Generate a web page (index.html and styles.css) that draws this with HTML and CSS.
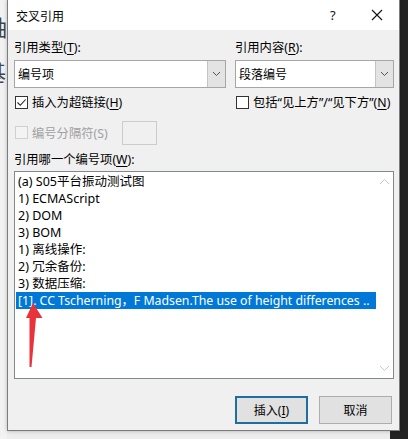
FILE: index.html
```html
<!DOCTYPE html>
<html lang="zh-CN">
<head>
<meta charset="utf-8">
<title>交叉引用</title>
<link rel="stylesheet" href="styles.css">
</head>
<body>
<div class="screen">
  <div class="doc">
    <span class="doc-g1">轴</span>
    <span class="doc-g2">基</span>
  </div>
  <div class="dialog">
    <div class="titlebar">
      <span class="title">交叉引用</span>
      <span class="help">?</span>
      <span class="close"><svg width="12" height="12" viewBox="0 0 12 12"><path d="M1 1L11 11M11 1L1 11" stroke="#111" stroke-width="1.1" fill="none"/></svg></span>
    </div>
    <div class="body">
      <div class="grid">
        <div class="label">引用类型(<u>T</u>):</div>
        <div class="label">引用内容(<u>R</u>):</div>
        <div class="select"><span class="sel-text">编号项</span><span class="sel-btn"><svg width="9" height="6" viewBox="0 0 9 6"><path d="M1 1L4.5 4.5L8 1" stroke="#555" stroke-width="1" fill="none"/></svg></span></div>
        <div class="select"><span class="sel-text">段落编号</span><span class="sel-btn"><svg width="9" height="6" viewBox="0 0 9 6"><path d="M1 1L4.5 4.5L8 1" stroke="#555" stroke-width="1" fill="none"/></svg></span></div>
        <div class="check"><span class="box"><svg width="11" height="11" viewBox="0 0 11 11"><path d="M1.5 5.5L4.3 8.3L9.6 2.5" stroke="#222" stroke-width="1.1" fill="none"/></svg></span>插入为超链接(<u>H</u>)</div>
        <div class="check"><span class="box"></span>包括“见上方”/“见下方”(<u>N</u>)</div>
      </div>
      <div class="sep-row">
        <div class="check disabled"><span class="box"></span>编号分隔符(S)</div>
        <span class="sep-input"></span>
      </div>
      <div class="label which">引用哪一个编号项(<u>W</u>):</div>
      <div class="listbox">
        <div class="items">
          <div class="item">(a) S05平台振动测试图</div>
          <div class="item">1) ECMAScript</div>
          <div class="item">2) DOM</div>
          <div class="item">3) BOM</div>
          <div class="item">1) 离线操作:</div>
          <div class="item">2) 冗余备份:</div>
          <div class="item">3) 数据压缩:</div>
          <div class="item selected">[1]. CC Tscherning，F Madsen.The use of height differences ..</div>
        </div>
        <div class="scrollbar">
          <svg width="11" height="7" viewBox="0 0 11 7"><path d="M1 6L5.5 1.5L10 6" stroke="#c8c8c8" stroke-width="1" fill="none"/></svg>
          <svg width="11" height="7" viewBox="0 0 11 7"><path d="M1 1L5.5 5.5L10 1" stroke="#c8c8c8" stroke-width="1" fill="none"/></svg>
        </div>
      </div>
      <div class="buttons">
        <button class="btn default">插入(<u>I</u>)</button>
        <button class="btn">取消</button>
      </div>
    </div>
  </div>
  <svg class="arrow" width="408" height="439" viewBox="0 0 408 439">
    <path d="M33 303L42.5 318L36 318L31.5 367L29.5 367L29.5 318L26 318Z" fill="#e8333b"/>
  </svg>
</div>
</body>
</html>
```

FILE: styles.css
```css
html, body {
  margin: 0;
  padding: 0;
}
body {
  width: 408px;
  height: 439px;
  overflow: hidden;
  font-family: "Noto Sans", "Noto Sans CJK SC", sans-serif;
  font-size: 12px;
  color: #000;
}
.screen {
  position: relative;
  width: 408px;
  height: 439px;
  background: linear-gradient(to right, #ededed 0, #ededed 390px, #232323 390px);
  overflow: hidden;
}
.doc {
  position: absolute;
  left: 0;
  top: 0;
  width: 7px;
  height: 439px;
  background: #f2f2f2;
  overflow: hidden;
  font-family: "Noto Sans CJK SC", sans-serif;
  font-size: 22px;
  color: #444;
}
.doc-g1 {
  position: absolute;
  left: -15px;
  top: 10px;
}
.doc-g2 {
  position: absolute;
  left: -16px;
  top: 55px;
}
.dialog {
  position: relative;
  margin-left: 7px;
  width: 391px;
  height: 430px;
  border: 1px solid #7c7c7c;
  border-top: none;
  background: #f0f0f0;
  display: flex;
  flex-direction: column;
  box-shadow: 0 0 4px rgba(0,0,0,0.25);
}
.titlebar {
  height: 30px;
  background: #fff;
  display: flex;
  align-items: center;
  padding-left: 8px;
  flex: none;
}
.title {
  font-family: "Noto Sans CJK SC", sans-serif;
  font-size: 12px;
  flex: 1;
}
.help {
  font-size: 13px;
  width: 14px;
  margin-right: 27px;
  color: #111;
}
.close {
  width: 12px;
  height: 12px;
  margin-right: 16px;
  display: flex;
}
.body {
  padding: 10px 5px 0 6px;
  display: flex;
  flex-direction: column;
}
.grid {
  display: grid;
  grid-template-columns: 212px 159px;
  column-gap: 9px;
  row-gap: 4px;
}
.label {
  height: 16px;
  line-height: 16px;
  white-space: nowrap;
  font-size: 12.3px;
}
u {
  text-decoration: underline;
  text-underline-offset: 2px;
}
.select {
  height: 28px;
  box-sizing: border-box;
  border: 1px solid #a6a6a6;
  background: #fff;
  display: flex;
  align-items: stretch;
}
.sel-text {
  flex: 1;
  padding-left: 3px;
  display: flex;
  align-items: center;
}
.sel-btn {
  width: 17px;
  background: #e3e3e3;
  border-left: 1px solid #c4c4c4;
  display: flex;
  align-items: center;
  justify-content: center;
}
.check {
  height: 16px;
  margin-top: 2px;
  display: flex;
  align-items: center;
  white-space: nowrap;
  font-size: 12.3px;
}
.box {
  width: 13px;
  height: 13px;
  box-sizing: border-box;
  border: 1px solid #333;
  background: #fff;
  margin: 0 4px 0 1px;
  display: flex;
  align-items: center;
  justify-content: center;
}
.check.disabled {
  color: #a0a0a0;
}
.check.disabled .box {
  border-color: #d0d0d0;
  background: #f3f3f3;
}
.sep-row {
  display: flex;
  align-items: center;
  margin-top: 10px;
  height: 25px;
}
.sep-row .check {
  margin-top: 0;
}
.sep-input {
  width: 35px;
  height: 24px;
  box-sizing: border-box;
  border: 1px solid #cccccc;
  margin-left: 14px;
}
.which {
  margin-top: 7px;
}
.listbox {
  margin-top: 3px;
  height: 208px;
  box-sizing: border-box;
  border: 1px solid #828790;
  background: #fff;
  display: flex;
}
.items {
  flex: 1;
  padding: 1px 0 0 1px;
  min-width: 0;
}
.item {
  height: 17px;
  line-height: 18px;
  padding-left: 2px;
  white-space: nowrap;
  overflow: hidden;
  font-size: 12.5px;
}
.item.selected {
  background: #0078d7;
  color: #fff;
  font-size: 12.3px;
}
.scrollbar {
  width: 17px;
  background: #fff;
  display: flex;
  flex-direction: column;
  justify-content: space-between;
  align-items: center;
  padding: 6px 0 6px;
}
.buttons {
  display: flex;
  justify-content: flex-end;
  gap: 11px;
  margin-top: 17px;
  margin-right: 2px;
}
.btn {
  width: 73px;
  height: 28px;
  box-sizing: border-box;
  border: 1px solid #adadad;
  background: #e1e1e1;
  font-family: "Noto Sans", "Noto Sans CJK SC", sans-serif;
  font-size: 12px;
  color: #000;
  padding: 0;
}
.btn.default {
  border: 2px solid #1f6e9c;
}
.arrow {
  position: absolute;
  left: 0;
  top: 0;
  pointer-events: none;
}
```
